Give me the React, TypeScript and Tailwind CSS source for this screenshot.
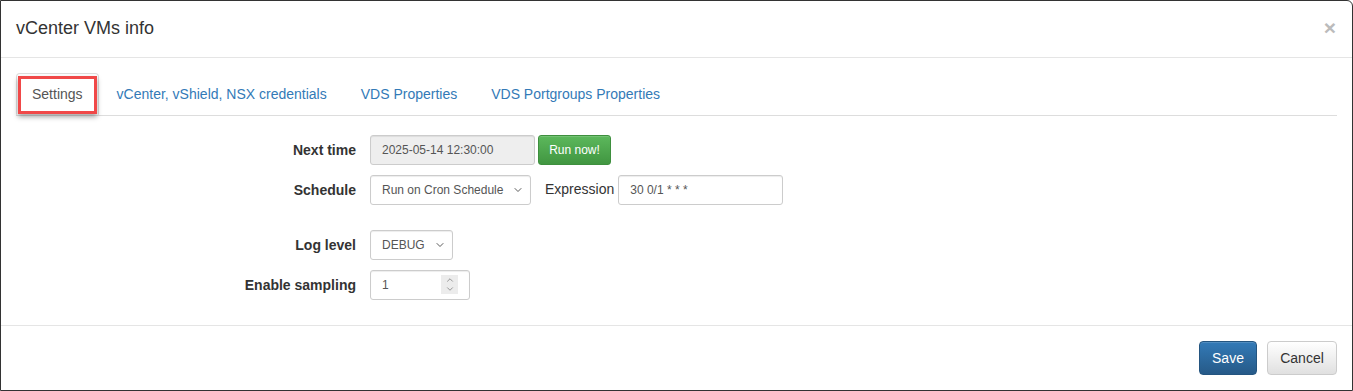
import { ChevronDown, ChevronUp } from 'lucide-react';

const font = { fontFamily: '"Liberation Sans", Arial, sans-serif' };

function Label({ children }: { children: React.ReactNode }) {
    return <div className="text-right text-[14px] font-bold text-[#333] leading-[30px]">{children}</div>;
}

function FakeSelect({ value, width }: { value: string; width: string }) {
    return (
        <div
            className={`${width} h-[30px] flex items-center justify-between pl-[11px] pr-[6px] border border-[#ccc] rounded-[3px] bg-white text-[12px] text-[#555] shadow-[inset_0_1px_1px_rgba(0,0,0,0.075)]`}
        >
            <span>{value}</span>
            <ChevronDown size={12} strokeWidth={1.75} className="text-[#444]" />
        </div>
    );
}

export default function App() {
    const tabs = ['vCenter, vShield, NSX credentials', 'VDS Properties', 'VDS Portgroups Properties'];

    return (
        <div style={font} className="w-[1353px] h-[391px] bg-white border border-[#333] rounded-tr-[6px] flex flex-col">
            {/* header */}
            <div className="flex items-center justify-between px-[15px] py-[15px] border-b border-[#e5e5e5]">
                <h4 className="text-[18px] leading-[25.7px] text-[#333]">vCenter VMs info</h4>
                <span className="text-[21px] font-bold leading-none text-[#bbb] mr-[1px] -mt-[3px]">×</span>
            </div>

            {/* body */}
            <div className="flex-1 px-[15px] pt-[15px]">
                <ul className="flex border-b border-[#ddd] text-[14px] leading-[20px]">
                    <li className="relative -mb-px mr-[2px]">
                        <div className="px-[15px] py-[10px] bg-white border border-[#ddd] border-b-transparent rounded-t-[4px] text-[#555]">
                            Settings
                        </div>
                        <div className="absolute left-[2px] top-[3px] w-[79px] h-[38px] border-[3px] border-[#f04848] shadow-[0_3px_5px_rgba(0,0,0,0.35)]" />
                    </li>
                    {tabs.map(t => (
                        <li key={t} className="mr-[2px]">
                            <div className="px-[15px] py-[10px] border border-transparent text-[#337ab7]">{t}</div>
                        </li>
                    ))}
                </ul>

                <div className="grid grid-cols-[340px_1fr] gap-x-[14px] gap-y-[10px] mt-[19px]">
                    <Label>Next time</Label>
                    <div className="flex items-center gap-[3px]">
                        <div className="w-[165px] h-[30px] flex items-center px-[11px] border border-[#ccc] rounded-[3px] bg-[#eee] text-[12px] text-[#555] shadow-[inset_0_1px_1px_rgba(0,0,0,0.075)]">
                            2025-05-14 12:30:00
                        </div>
                        <button className="w-[73px] h-[30px] rounded-[3px] border border-[#3e8f3e] bg-gradient-to-b from-[#5cb85c] to-[#419641] text-white text-[12px] shadow-[inset_0_1px_0_rgba(255,255,255,0.15)]">
                            Run now!
                        </button>
                    </div>

                    <Label>Schedule</Label>
                    <div className="flex items-center">
                        <FakeSelect value="Run on Cron Schedule" width="w-[161px]" />
                        <span className="ml-[14px] mr-[4px] text-[14px] text-[#333]">Expression</span>
                        <div className="w-[165px] h-[30px] flex items-center px-[11px] border border-[#ccc] rounded-[3px] bg-white text-[12px] text-[#555] shadow-[inset_0_1px_1px_rgba(0,0,0,0.075)]">
                            30 0/1 * * *
                        </div>
                    </div>

                    <div className="col-span-2 h-[5px]" />

                    <Label>Log level</Label>
                    <div className="flex">
                        <FakeSelect value="DEBUG" width="w-[83px]" />
                    </div>

                    <Label>Enable sampling</Label>
                    <div className="flex">
                        <div className="w-[100px] h-[30px] flex items-center justify-between pl-[11px] pr-[11px] border border-[#ccc] rounded-[3px] bg-white text-[12px] text-[#555] shadow-[inset_0_1px_1px_rgba(0,0,0,0.075)]">
                            <span>1</span>
                            <div className="w-[17px] h-[19px] bg-[#ececec] flex flex-col items-center justify-center text-[#777]">
                                <ChevronUp size={10} strokeWidth={1.75} className="-mb-[1px]" />
                                <ChevronDown size={10} strokeWidth={1.75} />
                            </div>
                        </div>
                    </div>
                </div>
            </div>

            {/* footer */}
            <div className="flex justify-end gap-[10px] px-[15px] py-[15px] border-t border-[#e5e5e5]">
                <button className="w-[58px] h-[34px] rounded-[4px] border border-[#245580] bg-gradient-to-b from-[#337ab7] to-[#265a88] text-white text-[14px] shadow-[inset_0_1px_0_rgba(255,255,255,0.15)]">
                    Save
                </button>
                <button className="w-[70px] h-[34px] rounded-[4px] border border-[#ccc] bg-gradient-to-b from-white to-[#e0e0e0] text-[#333] text-[14px] shadow-[inset_0_1px_0_rgba(255,255,255,0.15)]">
                    Cancel
                </button>
            </div>
        </div>
    );
}
